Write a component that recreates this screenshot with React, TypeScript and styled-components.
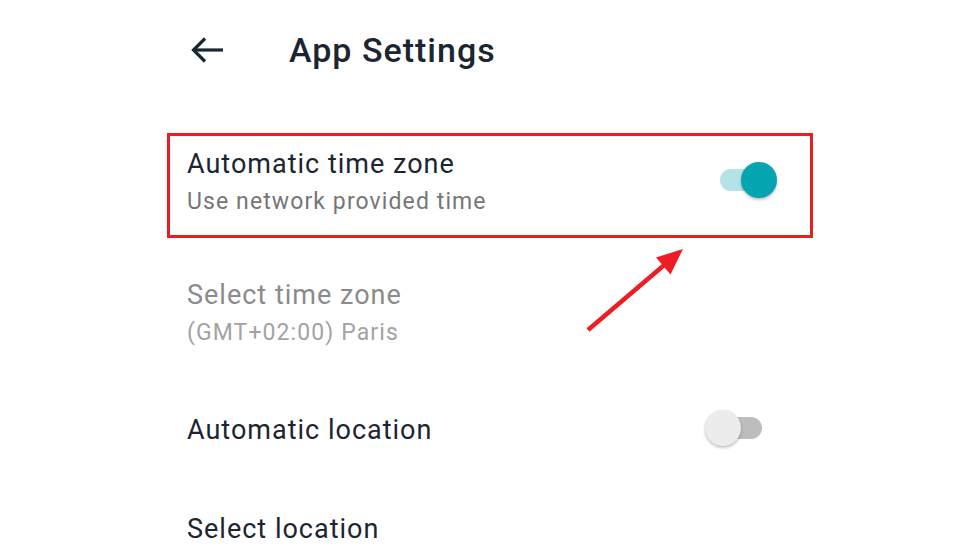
import React from "react";
import styled, { createGlobalStyle } from "styled-components";

const Global = createGlobalStyle`
  html, body { margin: 0; padding: 0; background: #ffffff; }
  body { font-family: Roboto, "Noto Sans", Arial, sans-serif; -webkit-font-smoothing: antialiased; }
`;

const Screen = styled.div`
  position: relative;
  width: 970px;
  height: 546px;
  overflow: hidden;
  background: #ffffff;
`;

const Page = styled.div`
  width: 646px;
  margin-left: 167px;
  display: flex;
  flex-direction: column;
`;

const Header = styled.header`
  display: flex;
  align-items: center;
  height: 40px;
  padding-top: 30px;
  padding-left: 23px;
  margin-bottom: 63px;
`;

const BackButton = styled.button`
  width: 36px;
  height: 36px;
  padding: 0;
  border: none;
  background: transparent;
  display: flex;
  align-items: center;
  justify-content: center;
  color: #1b2631;
`;

const Title = styled.h1`
  margin: 0 0 0 63px;
  font-size: 34px;
  line-height: 40px;
  font-weight: 500;
  color: #1b2631;
  letter-spacing: 1px;
`;

const Highlight = styled.div`
  border: 3px solid #ea1d22;
  padding: 12px 33px 19px 17px;
  margin-bottom: 8px;
  display: flex;
  align-items: center;
  justify-content: space-between;
`;

const Row = styled.div`
  padding: 33px 36px 34px 20px;
  display: flex;
  align-items: center;
  justify-content: space-between;
`;

const Texts = styled.div`
  display: flex;
  flex-direction: column;
`;

const ItemTitle = styled.div<{ $disabled?: boolean }>`
  font-size: 27px;
  line-height: 32px;
  font-weight: 400;
  letter-spacing: 1px;
  color: ${(p) => (p.$disabled ? "#8b8b8b" : "#1b2631")};
`;

const ItemSub = styled.div<{ $disabled?: boolean }>`
  margin-top: 8px;
  font-size: 23px;
  line-height: 28px;
  letter-spacing: 1.1px;
  color: ${(p) => (p.$disabled ? "#a3a3a3" : "#767676")};
`;

const SwitchBox = styled.div`
  position: relative;
  width: 72px;
  height: 36px;
  flex-shrink: 0;
  margin: -6px 0 -2px 0;
`;

const Track = styled.div<{ $on: boolean }>`
  position: absolute;
  left: 15px;
  top: 7px;
  width: 42px;
  height: 22px;
  border-radius: 11px;
  background: ${(p) => (p.$on ? "#b3e3e6" : "#bdbdbd")};
`;

const Thumb = styled.div<{ $on: boolean }>`
  position: absolute;
  top: 0;
  left: ${(p) => (p.$on ? "36px" : "0px")};
  width: 36px;
  height: 36px;
  border-radius: 50%;
  background: ${(p) => (p.$on ? "#05a6b1" : "#ececec")};
  box-shadow: 0 2px 3px rgba(0, 0, 0, 0.22), 0 0 1px rgba(0, 0, 0, 0.12);
`;

const Overlay = styled.svg`
  position: absolute;
  left: 0;
  top: 0;
  pointer-events: none;
`;

function Switch({ on }: { on: boolean }) {
  return (
    <SwitchBox>
      <Track $on={on} />
      <Thumb $on={on} />
    </SwitchBox>
  );
}

export default function App() {
  return (
    <>
      <Global />
      <Screen>
        <Page>
          <Header>
            <BackButton aria-label="Back">
              <svg width="34" height="28" viewBox="0 0 34 28" fill="none">
                <path d="M2.5 14 H32" stroke="currentColor" strokeWidth="3.2" />
                <path d="M14 2.5 L2.5 14 L14 25.5" stroke="currentColor" strokeWidth="3.2" strokeLinejoin="miter" />
              </svg>
            </BackButton>
            <Title>App Settings</Title>
          </Header>

          <Highlight>
            <Texts>
              <ItemTitle>Automatic time zone</ItemTitle>
              <ItemSub>Use network provided time</ItemSub>
            </Texts>
            <Switch on />
          </Highlight>

          <Row>
            <Texts>
              <ItemTitle $disabled>Select time zone</ItemTitle>
              <ItemSub $disabled>(GMT+02:00) Paris</ItemSub>
            </Texts>
          </Row>

          <Row>
            <Texts>
              <ItemTitle>Automatic location</ItemTitle>
            </Texts>
            <Switch on={false} />
          </Row>

          <Row>
            <Texts>
              <ItemTitle>Select location</ItemTitle>
            </Texts>
          </Row>
        </Page>

        <Overlay width="970" height="546" viewBox="0 0 970 546">
          <line x1="588" y1="330" x2="666" y2="263.5" stroke="#ee1c24" strokeWidth="4.5" />
          <polygon points="683,249 656,257.5 670.5,274.5" fill="#ee1c24" />
        </Overlay>
      </Screen>
    </>
  );
}
